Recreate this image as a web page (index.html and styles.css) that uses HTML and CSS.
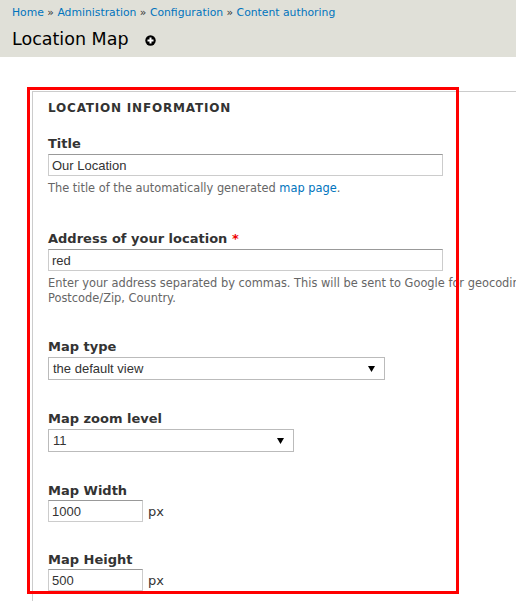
FILE: index.html
```html
<!DOCTYPE html>
<html>
<head>
<meta charset="utf-8">
<link rel="stylesheet" href="styles.css">
</head>
<body>
<div class="page">
  <div class="header">
    <div class="breadcrumb"><a href="#">Home</a> » <a href="#">Administration</a> » <a href="#">Configuration</a> » <a href="#">Content authoring</a></div>
    <h1 class="title">Location Map<span class="shortcut"><svg width="11" height="11" viewBox="0 0 11 11"><circle cx="5.5" cy="5.5" r="5.2" fill="#000"/><rect x="4.5" y="2.5" width="2" height="6" fill="#fff"/><rect x="2.5" y="4.5" width="6" height="2" fill="#fff"/></svg></span></h1>
  </div>
  <div class="fieldset">
    <div class="legend">Location information</div>
    <div class="form-item first">
      <label class="label">Title</label>
      <input class="text" type="text" value="Our Location">
      <div class="description">The title of the automatically generated <a href="#">map page</a>.</div>
    </div>
    <div class="form-item second">
      <label class="label">Address of your location <span class="req">*</span></label>
      <input class="text" type="text" value="red">
      <div class="description nowrap">Enter your address separated by commas. This will be sent to Google for geocoding.<br>Postcode/Zip, Country.</div>
    </div>
    <div class="form-item">
      <label class="label">Map type</label>
      <div class="select wide"><span>the default view</span><svg class="arrow" width="7" height="6" viewBox="0 0 7 6"><polygon points="0,0 7,0 3.5,6" fill="#000"/></svg></div>
    </div>
    <div class="form-item">
      <label class="label">Map zoom level</label>
      <div class="select narrow"><span>11</span><svg class="arrow" width="7" height="6" viewBox="0 0 7 6"><polygon points="0,0 7,0 3.5,6" fill="#000"/></svg></div>
    </div>
    <div class="form-item tight">
      <label class="label">Map Width</label>
      <div class="inline"><input class="text small" type="text" value="1000"><span class="suffix">px</span></div>
    </div>
    <div class="form-item">
      <label class="label">Map Height</label>
      <div class="inline"><input class="text small" type="text" value="500"><span class="suffix">px</span></div>
    </div>
  </div>
  <div class="annotation"></div>
</div>
</body>
</html>
```
FILE: styles.css
```css
html, body {
  margin: 0;
  padding: 0;
  overflow: hidden;
  background: #fff;
}
.page {
  position: relative;
  width: 516px;
  height: 601px;
  overflow: hidden;
  font-family: "DejaVu Sans", Verdana, sans-serif;
  color: #333;
}
a {
  color: #0074bd;
  text-decoration: none;
}
.header {
  background: #e0e0d8;
  height: 57px;
  padding: 5px 0 0 12px;
  box-sizing: border-box;
}
.breadcrumb {
  font-size: 10.8px;
  line-height: 16px;
}
.title {
  margin: 7px 0 0 0;
  font-size: 17.5px;
  letter-spacing: 0;
  line-height: 22px;
  font-weight: normal;
  color: #000;
  display: flex;
  align-items: center;
}
.shortcut {
  display: inline-flex;
  margin-left: 16px;
  margin-top: 3px;
}
.fieldset {
  margin: 34px 0 0 32px;
  border-top: 1px solid #ccc;
  border-left: 1px solid #ccc;
  padding: 7px 0 0 15px;
  height: 600px;
}
.legend {
  font-size: 12px;
  font-weight: bold;
  letter-spacing: 0.8px;
  text-transform: uppercase;
  line-height: 18px;
  color: #333;
  margin-bottom: 18px;
}
.form-item {
  margin-bottom: 30px;
}
.form-item.first {
  margin-bottom: 34px;
}
.form-item.second {
  margin-bottom: 32px;
}
.form-item.tight {
  margin-bottom: 29px;
}
.label {
  display: block;
  font-size: 13px;
  font-weight: bold;
  line-height: 18px;
  color: #333;
  margin-bottom: 1px;
}
.inline {
  display: flex;
  align-items: center;
  margin-top: -1px;
}
.req {
  color: #e00;
}
.text {
  display: block;
  box-sizing: border-box;
  width: 395px;
  height: 22px;
  margin: 0;
  padding: 0 3px;
  border: 1px solid #ccc;
  border-top-color: #999;
  font-family: "Liberation Sans", Arial, sans-serif;
  font-size: 13px;
  color: #333;
  outline: none;
}
.text.small {
  width: 95px;
}
.description {
  margin-top: 5px;
  font-size: 11.4px;
  line-height: 15px;
  color: #666;
}
.nowrap {
  white-space: nowrap;
  width: 480px;
  overflow: hidden;
}
.select {
  position: relative;
  box-sizing: border-box;
  height: 23px;
  margin-top: 1px;
  border: 1px solid #bbb;
  display: flex;
  align-items: center;
  padding-left: 4px;
  font-family: "Liberation Sans", Arial, sans-serif;
  font-size: 13px;
  color: #333;
}
.select.wide {
  width: 337px;
}
.select.narrow {
  width: 246px;
}
.arrow {
  position: absolute;
  right: 9px;
  top: 8px;
}
.suffix {
  margin-left: 5px;
  font-size: 13px;
  color: #333;
}
.annotation {
  position: absolute;
  left: 27px;
  top: 87px;
  width: 432px;
  height: 507px;
  box-sizing: border-box;
  border: 3px solid #ff0000;
}
```
